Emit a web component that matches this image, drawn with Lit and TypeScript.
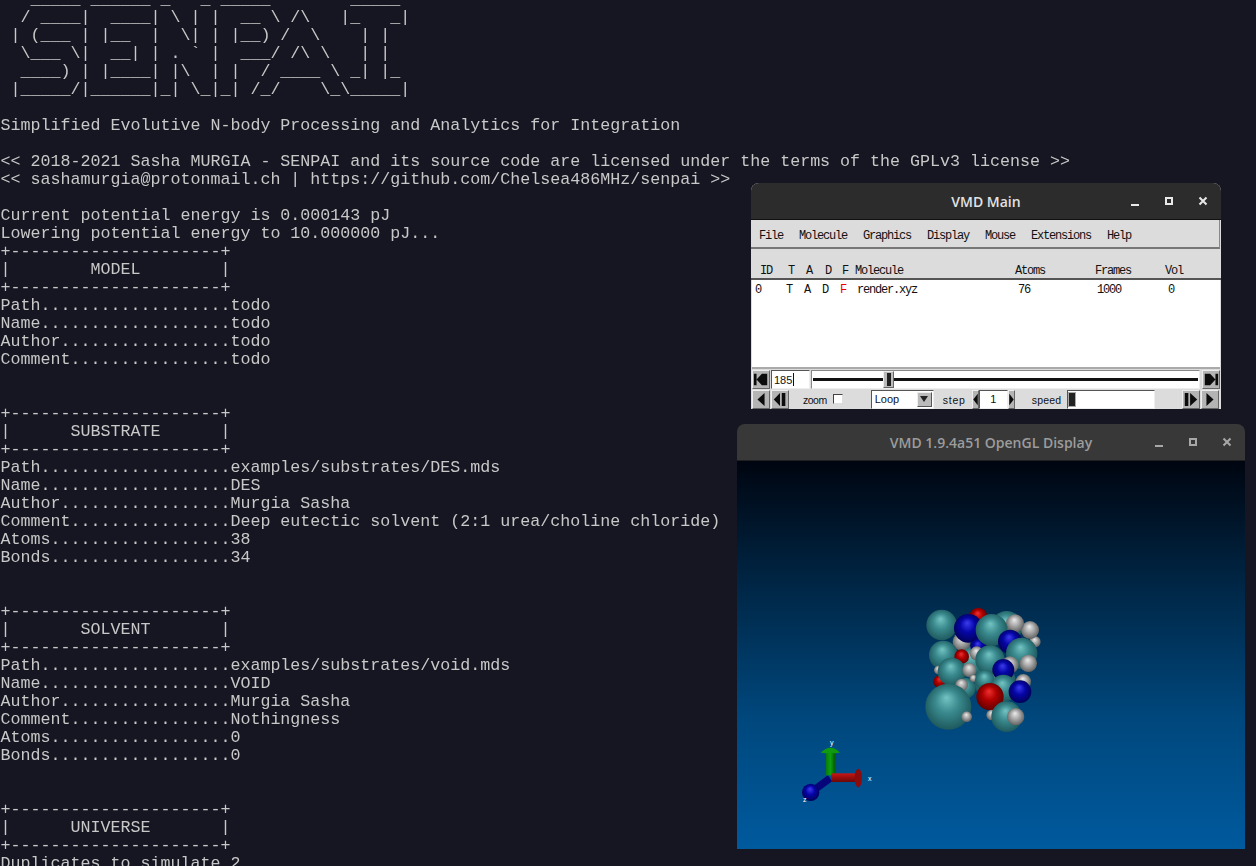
import { LitElement, html, css, svg } from "lit";
import { customElement } from "lit/decorators.js";

const kv = (k: string, v: string) => k + ".".repeat(23 - k.length) + v;
const rule = "+" + "-".repeat(21) + "+";
const box = (t: string, l: number) => [rule, "|" + " ".repeat(l) + t + " ".repeat(21 - l - t.length) + "|", rule];

const LINES: string[] = [
  "   _____ ______ _   _ _____        _____ ",
  "  / ____|  ____| \\ | |  __ \\ /\\   |_   _|",
  " | (___ | |__  |  \\| | |__) /  \\    | |  ",
  "  \\___ \\|  __| | . ` |  ___/ /\\ \\   | |  ",
  "  ____) | |____| |\\  | |  / ____ \\ _| |_ ",
  " |_____/|______|_| \\_|_| /_/    \\_\\_____|",
  "",
  "Simplified Evolutive N-body Processing and Analytics for Integration",
  "",
  "<< 2018-2021 Sasha MURGIA - SENPAI and its source code are licensed under the terms of the GPLv3 license >>",
  "<< sashamurgia@protonmail.ch | https://github.com/Chelsea486MHz/senpai >>",
  "",
  "Current potential energy is 0.000143 pJ",
  "Lowering potential energy to 10.000000 pJ...",
  ...box("MODEL", 8),
  kv("Path", "todo"),
  kv("Name", "todo"),
  kv("Author", "todo"),
  kv("Comment", "todo"),
  "",
  "",
  ...box("SUBSTRATE", 6),
  kv("Path", "examples/substrates/DES.mds"),
  kv("Name", "DES"),
  kv("Author", "Murgia Sasha"),
  kv("Comment", "Deep eutectic solvent (2:1 urea/choline chloride)"),
  kv("Atoms", "38"),
  kv("Bonds", "34"),
  "",
  "",
  ...box("SOLVENT", 7),
  kv("Path", "examples/substrates/void.mds"),
  kv("Name", "VOID"),
  kv("Author", "Murgia Sasha"),
  kv("Comment", "Nothingness"),
  kv("Atoms", "0"),
  kv("Bonds", "0"),
  "",
  "",
  ...box("UNIVERSE", 6),
  "Duplicates to simulate 2",
];

type Sphere = [number, number, number, "t" | "b" | "r" | "w"];
const SPHERES: Sphere[] = [
  [205, 50, 27, "r"], [290, 80, 47, "t"], [375, 125, 17, "w"], [95, 75, 46, "t"],
  [360, 90, 27, "w"], [315, 70, 27, "w"], [185, 185, 48, "t"], [255, 245, 62, "t"], [165, 265, 32, "t"],
  [155, 125, 27, "w"], [175, 85, 43, "b"], [205, 140, 24, "b"],
  [245, 90, 48, "t"], [300, 125, 36, "b"], [335, 160, 47, "t"],
  [355, 190, 26, "w"], [100, 165, 43, "t"], [155, 170, 22, "r"], [200, 160, 21, "w"],
  [90, 245, 20, "r"], [85, 210, 13, "w"], [125, 215, 42, "t"], [178, 210, 21, "w"],
  [155, 255, 19, "w"], [190, 235, 11, "w"], [240, 180, 44, "t"], [300, 195, 26, "w"], [280, 210, 33, "b"],
  [225, 240, 30, "t"], [280, 265, 41, "t"], [340, 245, 23, "w"], [330, 275, 34, "b"],
  [240, 290, 41, "r"], [115, 320, 69, "t"], [170, 350, 16, "w"], [245, 345, 16, "w"],
  [290, 350, 46, "t"], [317, 350, 26, "w"],
];

const GRADS: Record<string, string[]> = {
  t: ["#74c4c4", "#3a8a8e", "#174c50"],
  b: ["#3c3cf0", "#0606a8", "#000044"],
  r: ["#f03030", "#b00000", "#4c0000"],
  w: ["#ececec", "#ababab", "#4e4e4e"],
};

const grad = (id: string, c: string[]) => svg`<radialGradient id=${id} cx="0.5" cy="0.5" r="0.6" fx="0.46" fy="0.3">
  <stop offset="0" stop-color=${c[0]}></stop><stop offset="0.42" stop-color=${c[1]}></stop><stop offset="1" stop-color=${c[2]}></stop></radialGradient>`;

const MENU = ["File", "Molecule", "Graphics", "Display", "Mouse", "Extensions", "Help"];

const icon = (d: string) => html`<svg viewBox="0 0 18 18" preserveAspectRatio="none"><path d=${d} fill="#0c0c0c"></path></svg>`;

@customElement("app-root")
export class AppRoot extends LitElement {
  static styles = css`
    :host { display: block; position: relative; width: 1256px; height: 866px; overflow: hidden; background: #161622; }
    .term { margin-top: -9px; padding-left: 0.5px; font: 16.67px/18px "Liberation Mono", monospace; color: #c8c8c8; transform: translateZ(0); }
    .line { height: 18px; white-space: pre; width: max-content; }

    .win { position: absolute; }
    .main { left: 751px; top: 183px; width: 470px; height: 226px; display: flex; flex-direction: column; background: #dcdcdc; border-radius: 8px 8px 0 0; transform: translateZ(0); font: 12px/14px "Liberation Mono", monospace; letter-spacing: -1.2px; color: #111; }
    .bar { flex: none; display: flex; box-sizing: border-box; align-items: center; justify-content: center; border-radius: 8px 8px 0 0; font: 600 14px "Open Sans", sans-serif; letter-spacing: 0; position: relative; }
    .wb { position: absolute; left: 0; top: 0; }
    .main .bar { height: 37px; background: #2c2c2c; color: #e2e2e2; border-bottom: 1px solid #111; }
    .menu { flex: none; height: 29px; box-sizing: border-box; display: flex; align-items: center; gap: 16px; padding: 4px 0 0 8px; border-bottom: 2px solid #777; border-right: 1px solid #888; margin-right: 1px; }
    .cols { display: grid; grid-template-columns: 28px 18px 19px 17px 13px 160px 80px 70px 1fr; align-items: center; }
    .head { flex: none; height: 31px; box-sizing: border-box; padding: 14px 0 0 9px; border-bottom: 2px solid #555; }
    .list { flex: none; height: 89px; box-sizing: border-box; background: #fff; padding: 3px 0 0 3px; margin: 0 1px; border-bottom: 2px solid #aaa; }
    .list .cols { grid-template-columns: 31px 18px 18px 18px 17px 161px 79px 71px 1fr; }
    .red { color: #f00000; }
    .row { flex: none; height: 20px; display: flex; align-items: center; box-sizing: border-box; padding-left: 1px; font: 11px/14px "Liberation Sans", sans-serif; letter-spacing: 0; }
    .btn { flex: none; width: 18px; height: 19px; box-sizing: border-box; background: #b4b4b4; border: 1px solid; border-color: #eee #666 #666 #eee; display: flex; align-items: center; justify-content: center; margin-right: 1px; }
    .btn svg { display: block; width: 16px; height: 17px; }
    .btn.small { width: 7px; margin: 0; }
    .btn.small svg { width: 5px; height: 13px; }
    .field { flex: none; box-sizing: border-box; height: 19px; background: #fff; border: 1px solid; border-color: #555 #eee #eee #555; display: flex; align-items: center; padding: 1px 0 0 2px; }
    .f185 { width: 39px; margin-right: 1px; }
    .caret { display: inline-block; width: 1px; height: 13px; background: #111; margin-left: 1px; }
    .slider { flex: 1; height: 19px; box-sizing: border-box; background: #fff; border: 1px solid; border-color: #888 #eee #eee #888; display: flex; align-items: center; position: relative; margin-right: 2px; }
    .track { flex: 1; height: 3px; background: #111; margin: 0 1px; }
    .thumb { position: absolute; left: 71px; top: 0; width: 11px; height: 17px; box-sizing: border-box; background: #bbb; border: 1px solid; border-color: #eee #666 #666 #eee; display: flex; justify-content: center; }
    .thumb i { display: block; width: 4px; height: 13px; margin-top: 1px; background: #222; }
    .lbl { flex: none; font-size: 10.5px; padding-top: 1px; }
    .check { flex: none; width: 10px; height: 10px; background: #fff; border: 1px solid #444; border-right-color: #ddd; border-bottom-color: #ddd; box-sizing: border-box; margin: 0 28px 0 6px; }
    .zoom { margin-left: 13px; letter-spacing: -0.5px; }
    .drop { width: 63px; justify-content: space-between; padding: 0 0 0 3px; margin-right: 9px; }
    .dropbtn { width: 15px; height: 15px; background: #bbb; border: 1px solid; border-color: #eee #555 #555 #eee; box-sizing: border-box; margin-right: 1px; display: flex; align-items: center; justify-content: center; }
    .dropbtn::after { content: ""; border: 4px solid transparent; border-top: 6px solid #222; border-bottom: 0; }
    .one { width: 29px; justify-content: center; padding: 0; }
    .step { width: 24px; margin-right: 5px; letter-spacing: 0.8px; }
    .speed { width: 30px; margin: 0 5px 0 17px; letter-spacing: 0.2px; }
    .spd { width: 88px; padding: 0; margin-right: 27px; }
    .spd i { display: block; width: 8px; height: 15px; background: #222; border: 1px solid #aaa; box-sizing: border-box; }

    .disp { left: 737px; top: 424px; width: 508px; height: 425px; display: flex; flex-direction: column; }
    .disp .bar { height: 37px; background: #383838; color: #9c9c9c; border-bottom: 1px solid #202020; }
    .gl { flex: none; display: block; width: 508px; height: 388px; background: linear-gradient(#000510 0%, #002442 30%, #00477c 66%, #005a9e 100%); }
    .axl { font: 7px "Liberation Sans", sans-serif; fill: #fff; }
  `;

  private winBtns(color: string, xs: [number, number, number], w: number) {
    return svg`<svg class="wb" width=${w} height="37">
      <rect x=${xs[0]} y="21" width="8" height="2" fill=${color}></rect>
      <rect x=${xs[1] + 1} y="15" width="6" height="6" fill="none" stroke=${color} stroke-width="2"></rect>
      <path d=${`M${xs[2] + 0.5} 14.5l7 7m0-7l-7 7`} stroke=${color} stroke-width="2" fill="none"></path>
    </svg>`;
  }

  render() {
    return html`
      <div class="term">${LINES.map((l) => html`<div class="line">${l}</div>`)}</div>

      <section class="win main">
        <div class="bar">VMD Main${this.winBtns("#e8e8e8", [380, 414, 448], 470)}</div>
        <div class="menu">${MENU.map((m) => html`<span>${m}</span>`)}</div>
        <div class="head cols">
          <span>ID</span><span>T</span><span>A</span><span>D</span><span>F</span><span>Molecule</span><span>Atoms</span><span>Frames</span><span>Vol</span>
        </div>
        <div class="list">
          <div class="cols">
            <span>0</span><span>T</span><span>A</span><span>D</span><span class="red">F</span><span>render.xyz</span><span>76</span><span>1000</span><span>0</span>
          </div>
        </div>
        <div class="row">
          <div class="btn">${icon("M1 3h3v12H1zM4 9l6-6v12zM10 3h6v12h-6z")}</div>
          <div class="field f185">185<span class="caret"></span></div>
          <div class="slider"><div class="track"></div><div class="thumb"><i></i></div></div>
          <div class="btn">${icon("M2 3h6v12H2zM8 3l6 6-6 6zM14 3h3v12h-3z")}</div>
        </div>
        <div class="row">
          <div class="btn">${icon("M5 9l8-7v14z")}</div>
          <div class="btn">${icon("M2 9l7-7v14zM11 2h4v14h-4z")}</div>
          <span class="lbl zoom">zoom</span><span class="check"></span>
          <div class="field drop">Loop<span class="dropbtn"></span></div>
          <span class="lbl step">step</span>
          <div class="btn small">${icon("M1 9l16-8v16z")}</div>
          <div class="field one">1</div>
          <div class="btn small">${icon("M17 9L1 1v16z")}</div>
          <span class="lbl speed">speed</span>
          <div class="field spd"><i></i></div>
          <div class="btn">${icon("M2 2h4v14H2zM8 2l8 7-8 7z")}</div>
          <div class="btn">${icon("M5 2l8 7-8 7z")}</div>
        </div>
      </section>

      <section class="win disp">
        <div class="bar">VMD 1.9.4a51 OpenGL Display${this.winBtns("#a8a8a8", [418, 452, 486], 508)}</div>
        <svg class="gl" viewBox="0 0 508 388">
          <defs>
            ${Object.keys(GRADS).map((k) => grad("g" + k, GRADS[k]))}
            <linearGradient id="ga" x1="0" x2="1" y1="0" y2="0"><stop offset="0" stop-color="#0a7a0a"></stop><stop offset="0.5" stop-color="#0fa00f"></stop><stop offset="1" stop-color="#045a04"></stop></linearGradient>
            <linearGradient id="gx" x1="0" x2="0" y1="0" y2="1"><stop offset="0" stop-color="#c81414"></stop><stop offset="1" stop-color="#6a0808"></stop></linearGradient>
          </defs>
          <g transform="translate(173 139) scale(0.3333)">
            ${SPHERES.map(([x, y, r, c]) => svg`<circle cx=${x} cy=${y} r=${r} fill=${`url(#g${c})`}></circle>`)}
          </g>
          <g transform="translate(53 269) scale(0.3333)">
            <path d="M120 145L65 185" stroke="#06067a" stroke-width="22"></path>
            <rect x="108" y="66" width="27" height="70" fill="url(#ga)"></rect>
            <path d="M92 68Q122 38 150 68Q122 72 92 68Z" fill="#0f9a0f"></path>
            <rect x="125" y="130" width="72" height="26" fill="url(#gx)"></rect>
            <ellipse cx="205" cy="144" rx="11" ry="28" fill="#8c0c0c"></ellipse>
            <circle cx="62" cy="187" r="26" fill="url(#gb)"></circle>
          </g>
          <text class="axl" x="93" y="284">y</text>
          <text class="axl" x="131" y="320">x</text>
          <text class="axl" x="66" y="341">z</text>
        </svg>
      </section>
    `;
  }
}
